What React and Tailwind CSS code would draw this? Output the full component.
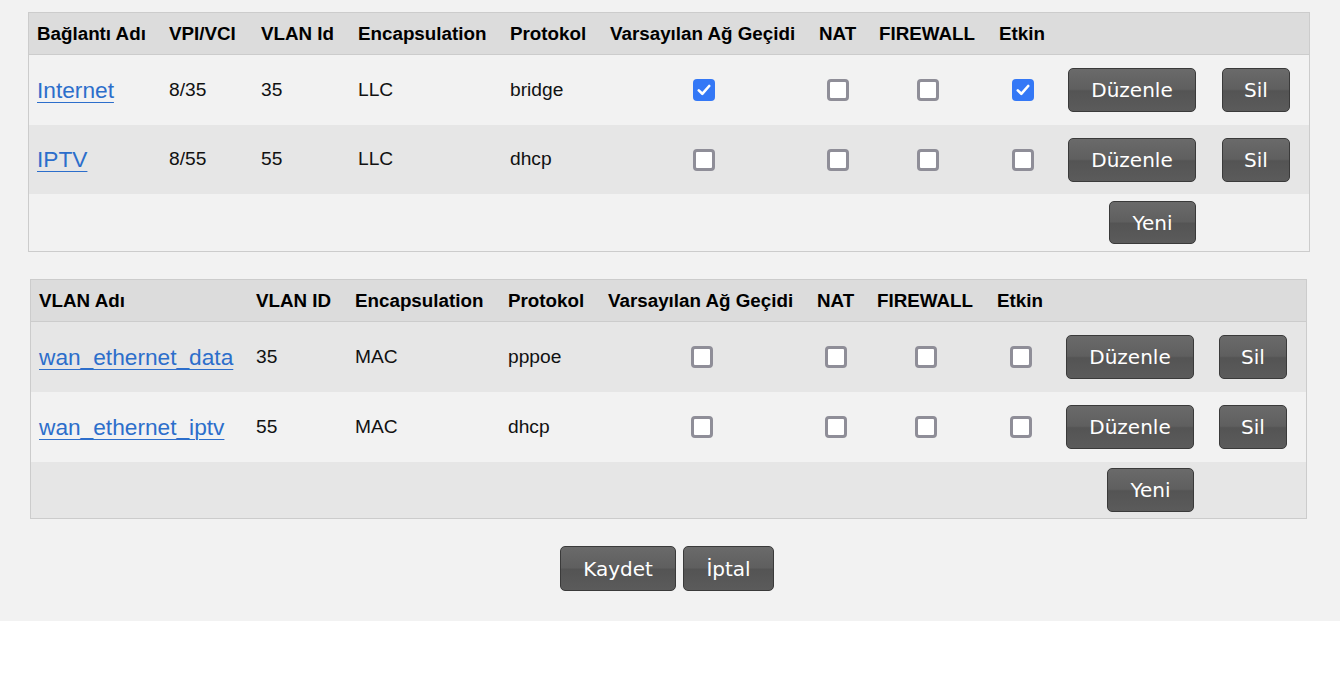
import React from "react";

const T1 = "grid grid-cols-[132px_92px_97px_152px_100px_209px_60px_120px_69px_154px_95px]";
const T2 = "grid grid-cols-[217px_99px_153px_100px_209px_60px_120px_69px_153px_95px]";

function Check({ on }) {
  if (on) {
    return (
      <span className="flex h-[22px] w-[22px] items-center justify-center rounded-[4px] bg-[#3478f6]">
        <svg width="14" height="12" viewBox="0 0 14 12" fill="none">
          <path d="M1.8 6.4 L5.3 9.8 L12.2 2" stroke="white" strokeWidth="2.6" strokeLinecap="round" strokeLinejoin="round" />
        </svg>
      </span>
    );
  }
  return <span className="block h-[22px] w-[22px] rounded-[4px] border-[3px] border-[#8f8e98] bg-white" />;
}

function Btn({ children, w }) {
  return (
    <button
      className={`${w} h-[44px] rounded-[5px] border border-[#3a3a3a] bg-[linear-gradient(to_bottom,#6a6a6a_0%,#5f5f5f_48%,#545454_52%,#5b5b5b_100%)] text-center text-[20px] leading-none text-white [font-family:'DejaVu_Sans',Verdana,sans-serif]`}
    >
      {children}
    </button>
  );
}

function CbCell({ on }) {
  return (
    <div className="flex items-center justify-center pr-[6px]">
      <Check on={on} />
    </div>
  );
}

function Txt({ children }) {
  return <div className="flex items-center pl-[8px] text-[19.2px] text-[#111]">{children}</div>;
}

function Lnk({ children }) {
  return (
    <div className="flex items-center pl-[8px]">
      <a href="#" className="text-[22.7px] text-[#2c6ecb] underline decoration-1 underline-offset-[4px]">
        {children}
      </a>
    </div>
  );
}

function Hd({ children }) {
  return <div className="flex items-center pl-[8px] pt-[1px] text-[18.8px] font-bold text-black whitespace-nowrap">{children}</div>;
}

function Actions() {
  return (
    <>
      <div className="flex items-center pl-[8px]">
        <Btn w="w-[128px]">Düzenle</Btn>
      </div>
      <div className="flex items-center pl-[8px]">
        <Btn w="w-[68px]">Sil</Btn>
      </div>
    </>
  );
}

export default function App() {
  return (
    <div className="[font-family:'Liberation_Sans',Arial,sans-serif]">
      <div className="h-[621px] bg-[#f2f2f2] pt-[12px]">
        {/* Table 1 */}
        <div className="ml-[28px] w-[1282px] border border-[#cccccc]">
          <div className={`${T1} h-[42px] border-b border-[#cccccc] bg-[#dcdcdc]`}>
            <Hd>Bağlantı Adı</Hd>
            <Hd>VPI/VCI</Hd>
            <Hd>VLAN Id</Hd>
            <Hd>Encapsulation</Hd>
            <Hd>Protokol</Hd>
            <Hd>Varsayılan Ağ Geçidi</Hd>
            <Hd>NAT</Hd>
            <Hd>FIREWALL</Hd>
            <Hd>Etkin</Hd>
            <div />
            <div />
          </div>
          <div className={`${T1} h-[70px] bg-[#f2f2f2]`}>
            <Lnk>Internet</Lnk>
            <Txt>8/35</Txt>
            <Txt>35</Txt>
            <Txt>LLC</Txt>
            <Txt>bridge</Txt>
            <CbCell on />
            <CbCell />
            <CbCell />
            <CbCell on />
            <Actions />
          </div>
          <div className={`${T1} h-[69px] bg-[#e6e6e6]`}>
            <Lnk>IPTV</Lnk>
            <Txt>8/55</Txt>
            <Txt>55</Txt>
            <Txt>LLC</Txt>
            <Txt>dhcp</Txt>
            <CbCell />
            <CbCell />
            <CbCell />
            <CbCell />
            <Actions />
          </div>
          <div className={`${T1} h-[57px] bg-[#f2f2f2]`}>
            <div className="col-start-10 flex items-start pl-[49px] pt-[7px]">
              <Btn w="w-[87px] !h-[43px]">Yeni</Btn>
            </div>
          </div>
        </div>

        {/* Table 2 */}
        <div className="ml-[30px] mt-[27px] w-[1277px] border border-[#cccccc]">
          <div className={`${T2} h-[42px] border-b border-[#cccccc] bg-[#dcdcdc]`}>
            <Hd>VLAN Adı</Hd>
            <Hd>VLAN ID</Hd>
            <Hd>Encapsulation</Hd>
            <Hd>Protokol</Hd>
            <Hd>Varsayılan Ağ Geçidi</Hd>
            <Hd>NAT</Hd>
            <Hd>FIREWALL</Hd>
            <Hd>Etkin</Hd>
            <div />
            <div />
          </div>
          <div className={`${T2} h-[70px] bg-[#e6e6e6]`}>
            <Lnk>wan_ethernet_data</Lnk>
            <Txt>35</Txt>
            <Txt>MAC</Txt>
            <Txt>pppoe</Txt>
            <CbCell />
            <CbCell />
            <CbCell />
            <CbCell />
            <Actions />
          </div>
          <div className={`${T2} h-[70px] bg-[#f2f2f2]`}>
            <Lnk>wan_ethernet_iptv</Lnk>
            <Txt>55</Txt>
            <Txt>MAC</Txt>
            <Txt>dhcp</Txt>
            <CbCell />
            <CbCell />
            <CbCell />
            <CbCell />
            <Actions />
          </div>
          <div className={`${T2} h-[56px] bg-[#e6e6e6]`}>
            <div className="col-start-9 flex items-start pl-[49px] pt-[6px]">
              <Btn w="w-[87px] !h-[44px]">Yeni</Btn>
            </div>
          </div>
        </div>

        {/* Bottom buttons */}
        <div className="mt-[27px] flex justify-center gap-[7px] pr-[6px]">
          <Btn w="w-[116px] !h-[45px]">Kaydet</Btn>
          <Btn w="w-[91px] !h-[45px]">İptal</Btn>
        </div>
      </div>
    </div>
  );
}
